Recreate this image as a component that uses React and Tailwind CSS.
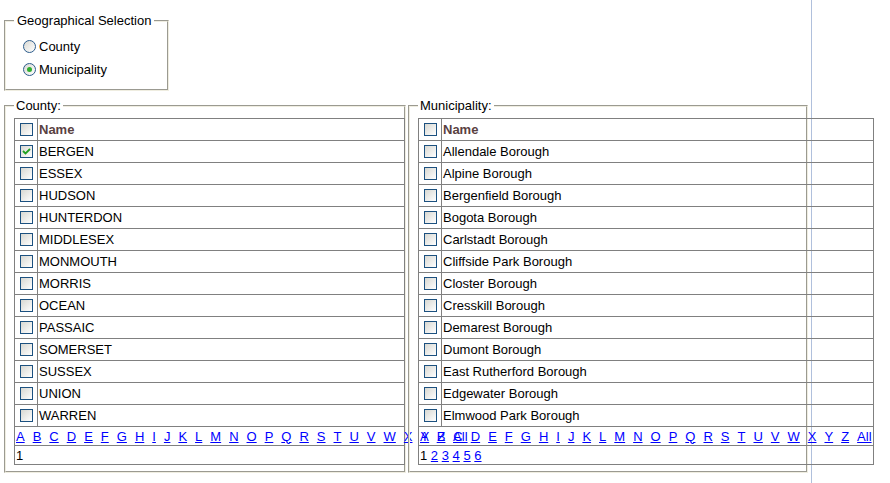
const counties = ["BERGEN", "ESSEX", "HUDSON", "HUNTERDON", "MIDDLESEX", "MONMOUTH", "MORRIS", "OCEAN", "PASSAIC", "SOMERSET", "SUSSEX", "UNION", "WARREN"];

const municipalities = [
    "Allendale Borough", "Alpine Borough", "Bergenfield Borough", "Bogota Borough", "Carlstadt Borough",
    "Cliffside Park Borough", "Closter Borough", "Cresskill Borough", "Demarest Borough", "Dumont Borough",
    "East Rutherford Borough", "Edgewater Borough", "Elmwood Park Borough",
];

const letters = ["A", "B", "C", "D", "E", "F", "G", "H", "I", "J", "K", "L", "M", "N", "O", "P", "Q", "R", "S", "T", "U", "V", "W", "X", "Y", "Z", "All"];

function CheckBox({ checked }) {
    return (
        <span className="block w-[13px] h-[13px] border border-[#1c5180] bg-linear-to-br from-[#d8d8d2] to-white">
            {checked && (
                <svg width="11" height="11" viewBox="0 0 11 11" className="block">
                    <polyline points="2,5 4.5,7.5 9,3" fill="none" stroke="#21a121" strokeWidth="1.8" />
                </svg>
            )}
        </span>
    );
}

function Radio({ checked, label }) {
    return (
        <div className="flex items-center h-[23px] pl-[9px]">
            <span className="flex items-center justify-center w-[13px] h-[13px] rounded-full border border-[#2c5c8c] bg-linear-to-br from-[#d8d8d2] to-white">
                {checked && <span className="w-[5px] h-[5px] rounded-full bg-[#2fae2f]" />}
            </span>
            <span className="ml-[3px]">{label}</span>
        </div>
    );
}

// one bordered list with checkbox column, A-Z pager and page numbers
function Grid({ rows, checked, pages, width }) {
    return (
        <div className={`${width} border-t border-l border-r border-[#808080]`}>
            <div className="flex h-[22px] border-b border-[#808080]">
                <div className="w-[23px] shrink-0 border-r border-[#808080] flex items-center pl-[5px]">
                    <CheckBox />
                </div>
                <div className="flex items-center pl-[1px] font-bold text-[#594141]">Name</div>
            </div>
            {rows.map(r => (
                <div key={r} className="flex h-[22px] border-b border-[#808080]">
                    <div className="w-[23px] shrink-0 border-r border-[#808080] flex items-center pl-[5px]">
                        <CheckBox checked={checked === r} />
                    </div>
                    <div className="flex items-center pl-[1px] whitespace-nowrap">{r}</div>
                </div>
            ))}
            <div className="h-[19px] border-b border-[#808080] flex items-center pl-[1px] whitespace-nowrap">
                {letters.map(l => (
                    <a key={l} href="#" className="text-[#0000ff] underline mr-2">{l}</a>
                ))}
            </div>
            <div className="h-[19px] border-b border-[#808080] flex items-center pl-[1px] whitespace-pre">
                {pages.map((p, i) => (
                    <span key={p}>
                        {i > 0 && " "}
                        {i === 0 ? <span>{p}</span> : <a href="#" className="text-[#0000ff] underline">{p}</a>}
                    </span>
                ))}
            </div>
        </div>
    );
}

export default function App() {
    const groove = "border-2 [--tw-border-style:groove] [border-style:groove] border-[#efede0]";

    return (
        <div className="flex bg-white text-black text-[13px] leading-[15px] font-['Liberation_Sans',Arial,sans-serif]">
            <div className="w-[812px] min-h-screen shrink-0 border-r border-[#b0c0dc] pt-[13px] pl-[4px]">
                <fieldset className={`${groove} w-[165px] min-w-0 pl-[8px] pt-[7px] pb-[8px]`}>
                    <legend className="px-[3px]">Geographical Selection</legend>
                    <Radio label="County" />
                    <Radio label="Municipality" checked />
                </fieldset>

                <div className="flex items-start mt-[7px]">
                    <fieldset className={`${groove} w-[402px] shrink-0 min-w-0 pl-[8px] pt-[5px] pb-[6px]`}>
                        <legend className="px-[2px]">County:</legend>
                        <Grid rows={counties} checked="BERGEN" pages={["1"]} width="w-[391px]" />
                    </fieldset>
                    <fieldset className={`${groove} w-[400px] shrink-0 min-w-0 ml-[2px] pl-[8px] pt-[5px] pb-[6px]`}>
                        <legend className="px-[2px]">Municipality:</legend>
                        <Grid rows={municipalities} pages={["1", "2", "3", "4", "5", "6"]} width="w-[456px]" />
                    </fieldset>
                </div>
            </div>
        </div>
    );
}
